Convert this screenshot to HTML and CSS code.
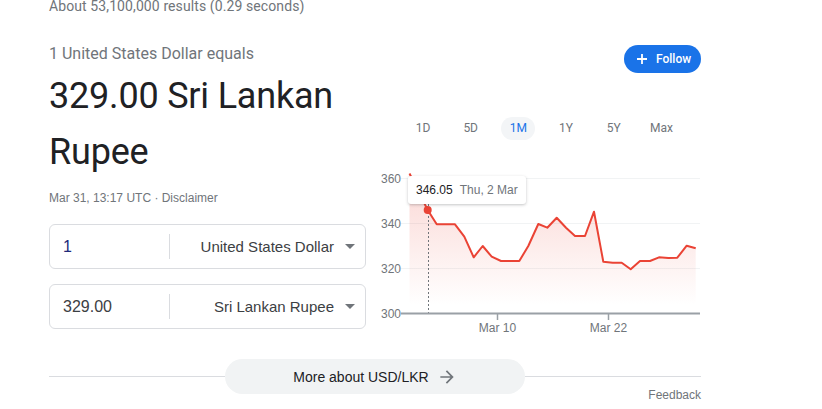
FILE: index.html
```html
<!DOCTYPE html>
<html lang="en">
<head>
  <meta charset="UTF-8">
  <meta name="viewport" content="width=device-width, initial-scale=1.0">
  <title>USD to LKR</title>
  <link rel="stylesheet" href="styles.css">
</head>
<body>
  <div class="page">
    <div class="stats">About 53,100,000 results (0.29 seconds)</div>

    <div class="main">
      <div class="converter">
        <div class="equals">1 United States Dollar equals</div>
        <div class="result">329.00 Sri Lankan Rupee</div>
        <div class="updated">Mar 31, 13:17 UTC · Disclaimer</div>

        <div class="field">
          <div class="amount amount-active">1</div>
          <div class="currency">
            <span>United States Dollar</span>
            <span class="caret"></span>
          </div>
        </div>
        <div class="field">
          <div class="amount">329.00</div>
          <div class="currency">
            <span>Sri Lankan Rupee</span>
            <span class="caret"></span>
          </div>
        </div>
      </div>

      <div class="chart-col">
        <button class="follow">
          <svg width="12" height="12" viewBox="0 0 12 12"><path d="M6 1v10M1 6h10" stroke="#fff" stroke-width="1.8"/></svg>
          Follow
        </button>

        <div class="ranges">
          <span class="range">1D</span>
          <span class="range">5D</span>
          <span class="range range-active">1M</span>
          <span class="range">1Y</span>
          <span class="range">5Y</span>
          <span class="range">Max</span>
        </div>

        <div class="chart">
          <svg width="327" height="170" viewBox="375 165 327 170">
            <defs>
              <linearGradient id="fade" gradientUnits="userSpaceOnUse" x1="0" y1="172" x2="0" y2="305">
                <stop offset="0" stop-color="#ea4335" stop-opacity="0.22"/>
                <stop offset="1" stop-color="#ea4335" stop-opacity="0"/>
              </linearGradient>
            </defs>

            <!-- grid -->
            <g stroke="#f1f3f4" stroke-width="1">
              <line x1="401" y1="178.5" x2="700" y2="178.5"/>
              <line x1="401" y1="223.5" x2="700" y2="223.5"/>
              <line x1="401" y1="268.5" x2="700" y2="268.5"/>
            </g>

            <g class="axis-label" text-anchor="end">
              <text x="401" y="182.5">360</text>
              <text x="401" y="227.5">340</text>
              <text x="401" y="272.5">320</text>
              <text x="401" y="317.5">300</text>
            </g>

            <!-- area + price line -->
            <path fill="url(#fade)" d="M409.5 173.5 L427.7 210 L436.7 224.3 L455 224.3 L464.3 236.7 L473.7 257.3 L482.7 246 L491.7 256.7 L501 261 L519.3 261 L528.3 246 L538.3 224 L547.3 227.7 L556.7 217.7 L566 227.7 L575 236 L585 236 L594 211.7 L603.3 261.7 L612.7 262.7 L621.7 262.7 L630.7 269.3 L640 261 L650 261 L659 257.3 L668.3 258 L677.3 257.7 L686.7 245.7 L695.7 248.3 L695.7 313 L409.5 313 Z"/>
            <polyline fill="none" stroke="#ea4335" stroke-width="2" stroke-linejoin="round" points="409.5,173.5 427.7,210 436.7,224.3 455,224.3 464.3,236.7 473.7,257.3 482.7,246 491.7,256.7 501,261 519.3,261 528.3,246 538.3,224 547.3,227.7 556.7,217.7 566,227.7 575,236 585,236 594,211.7 603.3,261.7 612.7,262.7 621.7,262.7 630.7,269.3 640,261 650,261 659,257.3 668.3,258 677.3,257.7 686.7,245.7 695.7,248.3"/>

            <line x1="428.5" y1="176" x2="428.5" y2="313" stroke="#70757a" stroke-width="1" stroke-dasharray="2 2"/>
            <circle cx="427.7" cy="210" r="4" fill="#ea4335"/>

            <!-- x axis -->
            <line x1="401" y1="313.5" x2="700" y2="313.5" stroke="#9aa0a6" stroke-width="2"/>
            <g stroke="#9aa0a6" stroke-width="1.5">
              <line x1="497.5" y1="314" x2="497.5" y2="320"/>
              <line x1="608.5" y1="314" x2="608.5" y2="320"/>
            </g>
            <g class="axis-label" text-anchor="middle">
              <text x="497.5" y="331.5">Mar 10</text>
              <text x="608.5" y="331.5">Mar 22</text>
            </g>
          </svg>

          <div class="tooltip">
            <span class="tip-price">346.05</span>
            <span class="tip-date">Thu, 2 Mar</span>
          </div>
        </div>
      </div>
    </div>

    <div class="more-row">
      <span class="rule"></span>
      <a class="more" href="#">
        More about USD/LKR
        <svg width="20" height="20" viewBox="0 0 24 24"><path fill="#70757a" d="M4 11h12.17l-5.59-5.59L12 4l8 8-8 8-1.41-1.41L16.17 13H4z"/></svg>
      </a>
      <span class="rule"></span>
    </div>
    <div class="feedback">Feedback</div>
  </div>
</body>
</html>
```

FILE: styles.css
```css
body {
  margin: 0;
  background: #fff;
  font-family: "Liberation Sans", Arial, sans-serif;
  color: #202124;
}

.page {
  width: 652px;
  padding-left: 49px;
}

.stats {
  font-family: Roboto, sans-serif;
  font-size: 14px;
  letter-spacing: 0.1px;
  line-height: 12px;
  color: #70757a;
}

.main {
  display: flex;
  gap: 9px;
  margin-top: 29px;
}

/* left side: result + inputs */
.converter {
  width: 317px;
}

.equals {
  margin-top: 1px;
  font-family: Roboto, sans-serif;
  font-size: 16px;
  line-height: 24px;
  color: #70757a;
}

.result {
  margin-top: 2px;
  font-family: Roboto, sans-serif;
  font-size: 36px;
  letter-spacing: -0.2px;
  line-height: 56px;
  color: #202124;
}

.updated {
  margin-top: 10px;
  font-size: 12px;
  line-height: 16px;
  color: #70757a;
}

.field {
  display: flex;
  align-items: center;
  height: 45px;
  box-sizing: border-box;
  border: 1px solid #dadce0;
  border-radius: 6px;
  margin-top: 15px;
}

.updated + .field {
  margin-top: 18px;
}

.amount {
  width: 106px;
  padding-left: 13px;
  font-size: 16px;
  color: #3c4043;
}

.amount-active {
  color: #202a7a;
}

.currency {
  flex: 1;
  display: flex;
  align-items: center;
  justify-content: flex-end;
  gap: 11px;
  height: 25px;
  padding-right: 10px;
  border-left: 1px solid #dadce0;
  font-size: 15px;
  color: #3c4043;
}

.caret {
  width: 0;
  height: 0;
  border-left: 5px solid transparent;
  border-right: 5px solid transparent;
  border-top: 5px solid #70757a;
}

/* right side: follow, ranges, chart */
.chart-col {
  width: 326px;
  display: flex;
  flex-direction: column;
}

.follow {
  align-self: flex-end;
  display: flex;
  align-items: center;
  gap: 8px;
  margin-top: 4px;
  height: 28px;
  width: 77px;
  padding: 0 0 0 12px;
  border: 0;
  border-radius: 14px;
  background: #1a73e8;
  color: #fff;
  font-family: Roboto, sans-serif;
  font-size: 12px;
  font-weight: 500;
}

.ranges {
  display: flex;
  gap: 13.7px;
  margin-top: 44px;
  margin-left: 31px;
}

.range {
  width: 34px;
  height: 23px;
  line-height: 23px;
  text-align: center;
  border-radius: 12px;
  font-family: Roboto, sans-serif;
  font-size: 12px;
  color: #70757a;
}

.range-active {
  background: #f3f5f7;
  color: #1a73e8;
}

.chart {
  position: relative;
  margin-top: 25px;
  height: 170px;
}

.chart svg {
  display: block;
}

.axis-label {
  font-family: "Liberation Sans", Arial, sans-serif;
  font-size: 12px;
  fill: #70757a;
}

.tooltip {
  position: absolute;
  left: 33px;
  top: 11px;
  width: 118px;
  height: 28px;
  box-sizing: border-box;
  padding-left: 8px;
  display: flex;
  align-items: center;
  gap: 7px;
  background: #fff;
  border-radius: 3px;
  box-shadow: 0 1px 3px rgba(60, 64, 67, 0.3);
  font-size: 12px;
}

.tip-price {
  color: #202124;
}

.tip-date {
  color: #70757a;
}

/* bottom link */
.more-row {
  display: flex;
  align-items: center;
  margin-top: 24px;
}

.rule {
  flex: 1;
  height: 1px;
  background: #dadce0;
}

.more {
  display: flex;
  align-items: center;
  justify-content: center;
  gap: 8px;
  width: 300px;
  height: 35px;
  border-radius: 18px;
  background: #f1f3f4;
  color: #202124;
  font-size: 14px;
  text-decoration: none;
}

.feedback {
  margin-top: -7px;
  text-align: right;
  font-size: 12px;
  line-height: 16px;
  color: #70757a;
}
```
